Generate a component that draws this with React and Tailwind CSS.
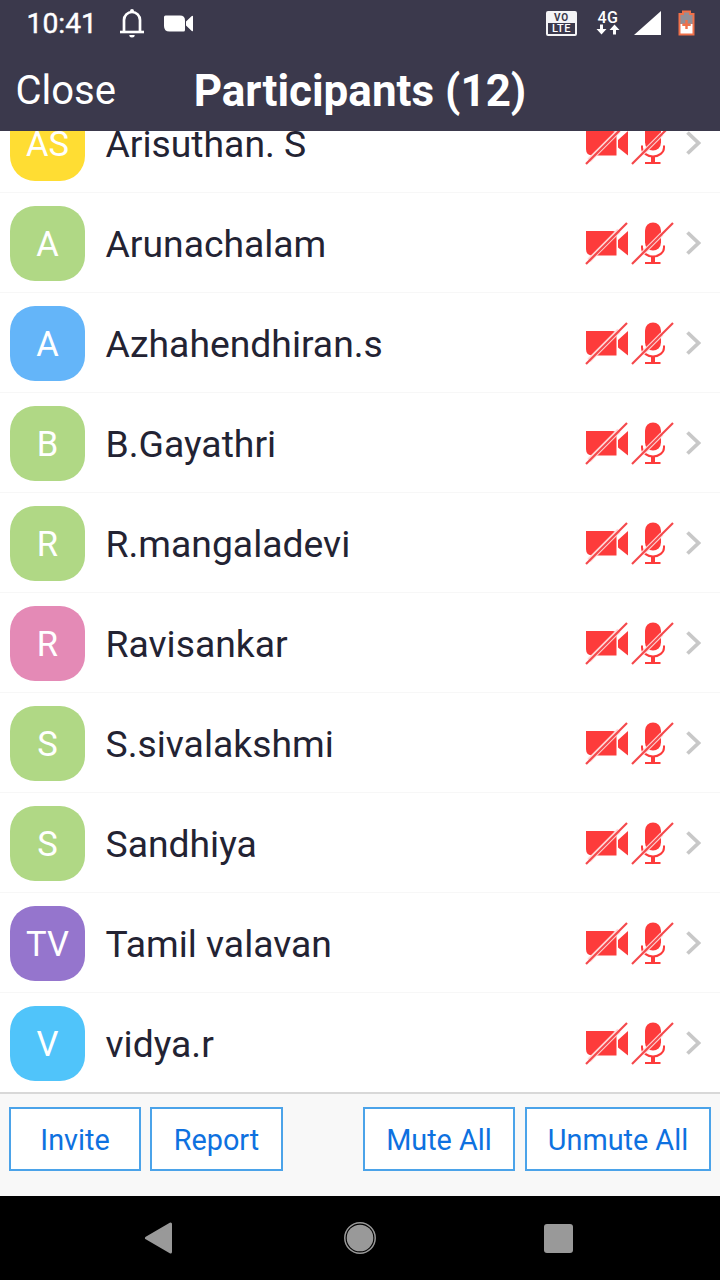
const participants = [
    { name: "Arisuthan. S", initials: "AS", color: "bg-[#ffdd33]" },
    { name: "Arunachalam", initials: "A", color: "bg-[#b0d885]" },
    { name: "Azhahendhiran.s", initials: "A", color: "bg-[#64b5f9]" },
    { name: "B.Gayathri", initials: "B", color: "bg-[#b0d885]" },
    { name: "R.mangaladevi", initials: "R", color: "bg-[#b0d885]" },
    { name: "Ravisankar", initials: "R", color: "bg-[#e48ab6]" },
    { name: "S.sivalakshmi", initials: "S", color: "bg-[#b0d885]" },
    { name: "Sandhiya", initials: "S", color: "bg-[#b0d885]" },
    { name: "Tamil valavan", initials: "TV", color: "bg-[#9575cd]" },
    { name: "vidya.r", initials: "V", color: "bg-[#50c4fa]" },
];

function StatusBar() {
    return (
        <div className="flex h-[46px] items-center pl-[26.5px] pr-[25px]">
            <span className="w-[92.5px] text-[28.300px] leading-none pt-[3px] [-webkit-text-stroke:0.4px_white]">10:41</span>
            {/* bell */}
            <svg width="26" height="30" viewBox="0 0 26 30" fill="none">
                <path d="M5 23V12a8 8 0 0 1 16 0v11" stroke="#fff" strokeWidth="2.700" />
                <path d="M1 24h24" stroke="#fff" strokeWidth="2.600" />
                <path d="M11 4.500V3a2 2 0 0 1 4 0v1.500zM10.300 27h5.400a2.700 2.500 0 0 1-5.400 0z" fill="#fff" />
            </svg>
            {/* meeting in progress */}
            <svg className="ml-[19px]" width="30" height="17" viewBox="0 0 30 17" fill="#fff">
                <path d="M0 2Q0 .5 1.500.5H16Q21 .5 21 5.500V15q0 1.500-1.500 1.500H5.500Q0 16.500 0 11zM22 6.500 27.500 1.200Q29 0 29 1.500v14q0 1.500-1.500.3L22 10.500z" />
            </svg>
            <div className="ml-auto flex items-center">
                <div className="flex h-[25px] w-[31px] flex-col overflow-hidden rounded-[2px] border-2 border-[#f4f4f6] text-center font-bold">
                    <span className="h-[10px] bg-[#f4f4f6] text-[10px] leading-[9px] tracking-[0.8px] text-[#3b394c]">VO</span>
                    <span className="h-[11px] text-[11px] leading-[11px] font-medium tracking-[0.5px]">LTE</span>
                </div>
                <div className="ml-[19px] flex w-[24px] flex-col items-center">
                    <span className="text-[16px] leading-[13px] font-medium tracking-[0.5px]">4G</span>
                    <svg width="24" height="11" viewBox="0 0 24 11" fill="#fff">
                        <path d="M4 0.500h3V5H10.500l-5 5.500L.5 5H4zM17 10.500h3V6H23.500l-5-5.500L13.500 6H17z" />
                    </svg>
                </div>
                <svg className="ml-[14px]" width="27" height="24" viewBox="0 0 27 24" fill="#fff">
                    <path d="M27 0v24H0z" />
                </svg>
                <svg className="ml-[17px]" width="17" height="26" viewBox="0 0 17 26">
                    <path d="M5 1.500h7V4h3.500v20.500h-14V4H5z" fill="#928f98" />
                    <path d="M2 14h13v10H2z" fill="#fff" />
                    <path d="M5 1.500h7V4h3.500v20.500h-14V4H5z" fill="none" stroke="#f0714a" strokeWidth="2" />
                    <path d="M7.300 10h2.400v3.500h3v2.400h-3v3.200H7.300v-3.200h-3v-2.400h3z" fill="#f0714a" />
                </svg>
            </div>
        </div>
    );
}

function CameraOff() {
    return (
        <svg width="43" height="43" viewBox="0 0 43 43">
            <path d="M1 9H27.500Q31.500 9 31.500 13V33.500H7.500Q1 33.500 1 27zM33 18 43 9V33.500L33 25.500z" fill="#fd3b3b" />
            <path d="M4 38.500 34 8.500" stroke="#ffd9d9" strokeWidth="4.600" />
            <path d="M1 42 42 1" stroke="#f5484b" strokeWidth="2.200" />
        </svg>
    );
}

function MicOff() {
    return (
        <svg width="43" height="43" viewBox="0 0 43 43">
            <rect x="14" y="0.500" width="16" height="28" rx="8" fill="#fd3b3b" />
            <path d="M11 23.500v2a11 9 0 0 0 22 0v-2" fill="none" stroke="#fd3b3b" strokeWidth="2" />
            <path d="M20 34.500h4v5.500h5.500v2H14v-2h6z" fill="#fd3b3b" />
            <path d="M11.500 31.500 31 12" stroke="#ffd9d9" strokeWidth="4.200" />
            <path d="M1 42 42 1" stroke="#f5484b" strokeWidth="2.200" />
        </svg>
    );
}

function ParticipantRow({ name, initials, color }) {
    return (
        <div className="flex h-[100px] shrink-0 items-center border-b border-[#f7f7f7] pt-px pl-[10px] pr-[19px]">
            <div className={`flex h-[75px] w-[75px] items-center justify-center rounded-[25px] pt-[3px] text-[34.500px] text-white ${color}`}>
                {initials}
            </div>
            <span className="ml-[20.5px] flex-1 pt-[4px] text-[37.300px] leading-none whitespace-nowrap text-[#232333]">{name}</span>
            <CameraOff />
            <span className="ml-[3px]">
                <MicOff />
            </span>
            <svg className="mb-px ml-[12px]" width="15" height="24" viewBox="0 0 15 24" fill="none">
                <path d="M1.500 1.500 12.500 12 1.500 22.500" stroke="#c8c8c8" strokeWidth="3.800" />
            </svg>
        </div>
    );
}

function FooterButton({ label, className }) {
    return (
        <button className={`h-[64px] border-2 border-[#4ba3e9] bg-white pt-[3px] text-[28.800px] leading-none text-[#0e71e0] ${className}`}>
            {label}
        </button>
    );
}

function App() {
    return (
        <div className="flex h-[1280px] w-[720px] flex-col overflow-hidden bg-white font-[Roboto,sans-serif]">
            <header className="h-[131px] shrink-0 bg-[#3b394c] text-white">
                <StatusBar />
                <div className="grid h-[85px] grid-cols-[1fr_auto_1fr] items-center px-[15.5px] pt-[5px]">
                    <span className="text-[40px] leading-none">Close</span>
                    <h1 className="text-[44px] leading-none font-bold whitespace-nowrap">Participants (12)</h1>
                </div>
            </header>

            {/* list is scrolled to the bottom, the first row is cut by the header */}
            <main className="flex h-[962px] shrink-0 flex-col justify-end overflow-hidden">
                {participants.map((p) => (
                    <ParticipantRow key={p.name} {...p} />
                ))}
            </main>

            <footer className="-mt-px flex h-[104px] shrink-0 border-t-2 border-[#d8d8d8] bg-[#f8f8f8] px-[9px] pt-[13px]">
                <FooterButton label="Invite" className="w-[132px]" />
                <FooterButton label="Report" className="ml-[9px] w-[133px]" />
                <FooterButton label="Mute All" className="ml-auto w-[152px]" />
                <FooterButton label="Unmute All" className="ml-[10px] w-[186px]" />
            </footer>

            <nav className="flex h-[84px] shrink-0 items-center bg-black pl-[144px]">
                <svg width="29" height="32" viewBox="0 0 29 32">
                    <path d="M26.500 2v28L2.500 16z" fill="#999" stroke="#999" strokeWidth="3" strokeLinejoin="round" />
                </svg>
                <svg className="ml-[171px]" width="32" height="32" viewBox="0 0 32 32">
                    <circle cx="16" cy="16" r="13.300" fill="#999" />
                    <circle cx="16" cy="16" r="15.200" fill="none" stroke="#999" strokeWidth="1.500" />
                </svg>
                <div className="ml-[168px] h-[29px] w-[29px] rounded-[3px] bg-[#999]" />
            </nav>
        </div>
    );
}

export default App;
